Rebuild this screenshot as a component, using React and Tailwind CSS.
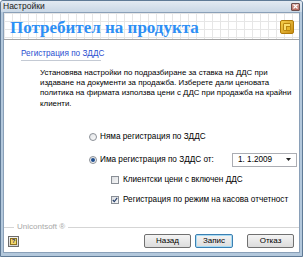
import React from 'react'

const font = { fontFamily: '"Liberation Sans", Arial, sans-serif' }

function Radio({ checked }) {
  return (
    <span className="w-[8px] h-[8px] rounded-full border border-[#8a8f96] bg-gradient-to-br from-[#e2e4e7] to-[#fbfbfb] flex items-center justify-center shrink-0">
      {checked && <span className="w-[4px] h-[4px] rounded-full bg-[#1f4f8f]" />}
    </span>
  )
}

function Check({ checked }) {
  return (
    <span className="w-[8px] h-[8px] border border-[#8a8f96] bg-gradient-to-br from-[#dcdee2] to-[#f7f7f7] flex items-center justify-center shrink-0">
      {checked && (
        <svg width="6" height="6" viewBox="0 0 6 6">
          <path d="M0.8 3 L2.3 4.6 L5.2 0.9" fill="none" stroke="#27406b" strokeWidth="1.1" />
        </svg>
      )}
    </span>
  )
}

function Button({ children, focused }) {
  return (
    <div
      className={`h-[14px] flex items-center justify-center rounded-[2px] border bg-gradient-to-b from-[#f4f4f4] to-[#dcdcdc] text-[8px] leading-none text-black ${
        focused ? 'border-[#3c7fb1] shadow-[inset_0_0_0_1px_#a8dcf5]' : 'border-[#707070]'
      }`}
    >
      {children}
    </div>
  )
}

export default function App() {
  return (
    <div
      className="w-[303px] h-[257px] flex flex-col bg-[#b3c8dc] border border-[#5f7a96] rounded-t-[3px] overflow-hidden"
      style={font}
    >
      {/* Title bar */}
      <div className="h-[11px] shrink-0 flex items-center justify-between px-[2px] bg-gradient-to-b from-[#e3eaf2] to-[#cad8e6]">
        <span className="text-[8.5px] leading-none text-[#1a1a1a]">Настройки</span>
        <div className="w-[9px] h-[8px] border border-[#6c4d4d] rounded-[1px] bg-gradient-to-b from-[#d9a39a] to-[#b96a5f] flex items-center justify-center">
          <svg width="5" height="5" viewBox="0 0 5 5">
            <path d="M0.5 0.5 L4.5 4.5 M4.5 0.5 L0.5 4.5" stroke="#fff" strokeWidth="1.1" />
          </svg>
        </div>
      </div>

      {/* Client area */}
      <div className="flex-1 mx-[2px] mb-[3px] flex flex-col bg-white border border-[#8aa0b8] overflow-hidden">
        {/* Header */}
        <div className="h-[27px] shrink-0 flex items-center justify-between pl-[6px] pr-[5px] border-b border-[#a5a5a5] bg-white bg-[linear-gradient(#e6e6e6_1px,transparent_1px),linear-gradient(90deg,#e6e6e6_1px,transparent_1px)] bg-[length:8px_8px]">
          <span
            className="text-[17px] font-bold text-[#2d8ff5] leading-none mt-[2px]"
            style={{ fontFamily: '"Liberation Serif", "Times New Roman", serif' }}
          >
            Потребител на продукта
          </span>
          <div className="w-[14px] h-[14px] rounded-[2px] bg-gradient-to-br from-[#f6cf4a] to-[#c98e0e] border border-[#b07a0a] flex items-center justify-center mt-[2px]">
            <div className="w-[8px] h-[8px] rounded-[1px] bg-[#f9dd6e] border border-[#b9860f] flex items-end justify-end">
              <div className="w-[4px] h-[4px] bg-[#e7b62a] border-l border-t border-[#b9860f]" />
            </div>
          </div>
        </div>

        {/* Body */}
        <div className="flex flex-col text-[8.2px] leading-[10px] text-black">
          <div className="ml-[17px] mt-[9px] w-[80px] pb-[1px] border-b border-[#c4cad4] whitespace-nowrap text-[#2a4fd0]">
            Регистрация по ЗДДС
          </div>

          <div className="ml-[36px] mt-[7px] text-[7.9px] leading-[10.2px] whitespace-nowrap">
            <div>Установява настройки по подразбиране за ставка на ДДС при</div>
            <div>издаване на документи за продажба. Изберете дали ценовата</div>
            <div>политика на фирмата използва цени с ДДС при продажба на крайни</div>
            <div>клиенти.</div>
          </div>

          <div className="ml-[85px] mt-[23px] flex items-center gap-[3px]">
            <Radio />
            <span>Няма регистрация по ЗДДС</span>
          </div>

          <div className="ml-[85px] mt-[11px] flex items-center">
            <div className="flex items-center gap-[3px]">
              <Radio checked />
              <span>Има регистрация по ЗДДС от:</span>
            </div>
            <div className="ml-auto mr-[2px] w-[65px] h-[14px] border border-[#abadb3] bg-white flex items-center justify-between px-[5px]">
              <span>1. 1.2009</span>
              <svg width="5" height="3" viewBox="0 0 5 3">
                <path d="M0 0 H5 L2.5 3 Z" fill="#222" />
              </svg>
            </div>
          </div>

          <div className="ml-[107px] mt-[8px] flex items-center gap-[4px]">
            <Check />
            <span>Клиентски цени с включен ДДС</span>
          </div>

          <div className="ml-[107px] mt-[10px] flex items-center gap-[4px]">
            <Check checked />
            <span>Регистрация по режим на касова отчетност</span>
          </div>
        </div>

        {/* Footer */}
        <div className="flex items-center mt-auto">
          <div className="w-[10px] border-t border-[#d5d5d5]" />
          <span className="px-[3px] text-[8px] leading-[10px] text-[#a8a8a8]">Unicontsoft ®</span>
          <div className="flex-1 border-t border-[#d5d5d5]" />
        </div>
        <div className="flex items-center px-[3px] pt-[2px] pb-[4px]">
          <div className="w-[11px] h-[11px] ml-[1px] border border-[#6d6d6d] bg-gradient-to-b from-[#f2f2f2] to-[#d4d4d4] flex items-center justify-center">
            <div className="w-[7px] h-[7px] bg-[#f4d86a] border border-[#8a7020] flex items-center justify-center text-[6px] font-bold leading-none text-[#1d2f6a]">
              ?
            </div>
          </div>
          <div className="ml-auto flex items-center">
            <div className="w-[47px]"><Button>Назад</Button></div>
            <div className="w-[38px] ml-[4px]"><Button focused>Запис</Button></div>
            <div className="w-[47px] ml-[14px] mr-[2px]"><Button>Отказ</Button></div>
          </div>
        </div>
      </div>
    </div>
  )
}
